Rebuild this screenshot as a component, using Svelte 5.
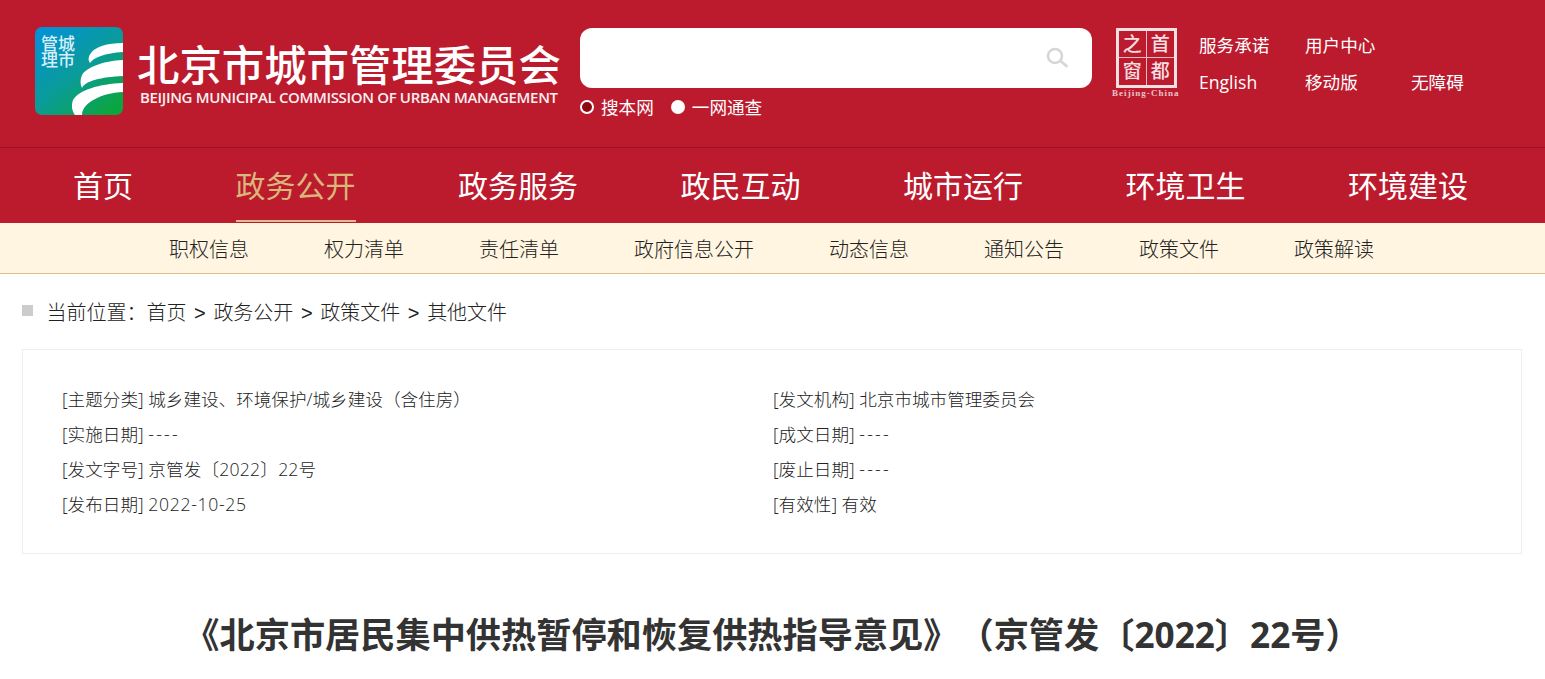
<script>
  const LP = '\uFF08';
  const RP = '\uFF09';
  const COLON = '\uFF1A';
  const nav = ['首页', '政务公开', '政务服务', '政民互动', '城市运行', '环境卫生', '环境建设'];
  const sub = ['职权信息', '权力清单', '责任清单', '政府信息公开', '动态信息', '通知公告', '政策文件', '政策解读'];
  const crumbs = ['首页', '政务公开', '政策文件', '其他文件'];
  const meta = [
    { k: '[主题分类]', v: `城乡建设、环境保护/城乡建设${LP}含住房${RP}`, kind: '', k2: '[发文机构]', v2: '北京市城市管理委员会', kind2: '' },
    { k: '[实施日期]', v: '----', kind: 'dash', k2: '[成文日期]', v2: '----', kind2: 'dash' },
    { k: '[发文字号]', v: '京管发〔2022〕22号', kind: 'num', k2: '[废止日期]', v2: '----', kind2: 'dash' },
    { k: '[发布日期]', v: '2022-10-25', kind: 'date', k2: '[有效性]', v2: '有效', kind2: '' }
  ];
  const title = `《北京市居民集中供热暂停和恢复供热指导意见》${LP}京管发〔2022〕22号${RP}`;
</script>

<header class="top">
  <div class="logo">
    <svg class="logo-art" viewBox="0 0 88 88" aria-hidden="true">
      <defs>
        <linearGradient id="lg" x1="0" y1="0" x2="0.8" y2="1">
          <stop offset="0" stop-color="#0290dc" />
          <stop offset="0.55" stop-color="#0a9c9a" />
          <stop offset="1" stop-color="#0ba540" />
        </linearGradient>
      </defs>
      <rect width="88" height="88" rx="7" fill="url(#lg)" />
      <path d="M88 16C72 16 60 20 56 26C53 30 53 33 55 36C58 31 70 26 88 25Z" fill="#fff" />
      <path d="M88 33C68 34 52 40 47 48C45 53 45 57 47 61C50 54 66 50 88 49Z" fill="#fff" />
      <path d="M88 56C64 57 44 63 38 73C36 79 37 84 40 88H47C47 76 66 66 88 65Z" fill="#fff" />
    </svg>
    <span class="logo-cn">管城<br />理市</span>
  </div>
  <div class="brand">
    <div class="brand-cn">北京市城市管理委员会</div>
    <div class="brand-en">BEIJING MUNICIPAL COMMISSION OF URBAN MANAGEMENT</div>
  </div>
  <div class="search-col">
    <div class="search">
      <svg viewBox="0 0 24 24" width="24" height="24" aria-hidden="true">
        <circle cx="9" cy="10" r="7" fill="none" stroke="#d6d6d6" stroke-width="2.6" />
        <path d="M14.5 15L20.5 20" stroke="#d6d6d6" stroke-width="2.8" stroke-linecap="round" />
      </svg>
    </div>
    <div class="radios">
      <span class="radio"><i class="dot off"></i>搜本网</span>
      <span class="radio"><i class="dot on"></i>一网通查</span>
    </div>
  </div>
  <div class="capital">
    <div class="seal">
      <span>之</span><span>首</span><span>窗</span><span>都</span>
    </div>
    <div class="seal-en">Beijing-China</div>
  </div>
  <div class="links">
    <span>服务承诺</span><span>用户中心</span><span></span>
    <span>English</span><span>移动版</span><span>无障碍</span>
  </div>
</header>

<nav class="main">
  {#each nav as n, i}
    <span class="nav-item" class:active={i === 1}>{n}</span>
  {/each}
</nav>

<div class="sub">
  {#each sub as s}<span>{s}</span>{/each}
</div>

<div class="crumb">
  <i class="sq"></i>
  <span>当前位置{COLON}</span>
  {#each crumbs as c, i}
    {#if i > 0}<span class="sep">&gt;</span>{/if}<span>{c}</span>
  {/each}
</div>

<section class="meta">
  {#each meta as r}
    <div class="cell"><span>{r.k}</span> <span class={r.kind}>{r.v}</span></div>
    <div class="cell"><span>{r.k2}</span> <span class={r.kind2}>{r.v2}</span></div>
  {/each}
</section>

<h1>{title}</h1>

<style>
  :global(body) {
    margin: 0;
    background: #fff;
    color: #222;
    font-family: "Open Sans", "Noto Sans CJK SC", sans-serif;
    font-weight: 300;
    overflow: hidden;
  }
  .top {
    height: 147px;
    background: #bc1b2e;
    display: flex;
    align-items: flex-start;
    color: #fff;
    box-sizing: border-box;
    padding-left: 35px;
    font-weight: 400;
  }
  .logo {
    position: relative;
    width: 88px;
    height: 88px;
    margin-top: 27px;
    flex: none;
  }
  .logo-art {
    display: block;
    width: 88px;
    height: 88px;
  }
  .logo-cn {
    position: absolute;
    left: 6px;
    top: 9px;
    font-size: 17px;
    line-height: 16px;
    font-weight: 500;
    color: #d8eef8;
  }
  .brand {
    margin: 42px 0 0 15px;
    width: 427px;
    flex: none;
  }
  .brand-cn {
    font-size: 42.4px;
    line-height: 46px;
    font-weight: 500;
    white-space: nowrap;
    margin-left: -1px;
  }
  .brand-en {
    font-size: 15px;
    font-weight: 600;
    line-height: 18px;
    letter-spacing: -0.34px;
    margin-left: 2px;
    white-space: nowrap;
    color: #fbeef0;
  }
  .search-col {
    margin: 28px 0 0 15px;
    width: 512px;
    flex: none;
  }
  .search {
    height: 60px;
    background: #fff;
    border-radius: 12px;
    display: flex;
    align-items: center;
    justify-content: flex-end;
    padding-right: 22px;
    box-sizing: border-box;
  }
  .radios {
    display: flex;
    gap: 17px;
    font-size: 17.6px;
    line-height: 24px;
    margin-top: 7px;
    height: 24px;
  }
  .radio {
    display: flex;
    align-items: center;
    gap: 7px;
  }
  .dot {
    width: 14px;
    height: 14px;
    border-radius: 50%;
    box-sizing: border-box;
    display: block;
  }
  .dot.off {
    background: #8c0a14;
    border: 2px solid #fff;
  }
  .dot.on {
    background: #fff;
  }
  .capital {
    margin: 28px 0 0 21px;
    width: 67px;
    flex: none;
  }
  .seal {
    width: 61px;
    height: 60px;
    margin-left: 3px;
    box-sizing: border-box;
    border: 3px solid #f4dfe2;
    display: grid;
    grid-template-columns: 1fr 1fr;
    grid-template-rows: 1fr 1fr;
  }
  .seal span {
    display: flex;
    align-items: center;
    justify-content: center;
    font-size: 19px;
    font-weight: 500;
    line-height: 1;
    color: #f4dfe2;
    overflow: hidden;
  }
  .seal span:nth-child(odd) {
    border-right: 1px solid #e8bcc3;
  }
  .seal span:nth-child(-n + 2) {
    border-bottom: 1px solid #e8bcc3;
  }
  .seal-en {
    font-family: "Liberation Serif", serif;
    font-weight: 700;
    font-size: 9px;
    line-height: 11px;
    letter-spacing: 1.05px;
    margin-left: -1px;
    white-space: nowrap;
    color: #e9c5ca;
  }
  .links {
    margin: 27px 0 0 19px;
    display: grid;
    grid-template-columns: 106px 106px 106px;
    grid-auto-rows: 37px;
    font-size: 17.6px;
    line-height: 37px;
    white-space: nowrap;
  }
  .main {
    height: 76px;
    background: #bc1b2e;
    border-top: 1px solid #a01020;
    box-sizing: border-box;
    display: flex;
    justify-content: space-between;
    padding: 0 77px 0 73px;
  }
  .nav-item {
    font-size: 30px;
    font-weight: 400;
    line-height: 76px;
    height: 74px;
    color: #fff;
    box-sizing: border-box;
  }
  .nav-item.active {
    color: #dab679;
    border-bottom: 2px solid #dcbc8c;
  }
  .sub {
    height: 51px;
    background: #fff5e0;
    border-bottom: 1px solid #dcc08f;
    box-sizing: border-box;
    display: flex;
    justify-content: center;
    gap: 75px;
    padding-right: 2px;
    font-size: 20px;
    line-height: 53px;
  }
  .crumb {
    display: flex;
    align-items: center;
    margin: 22px 0 0 22px;
    height: 34px;
    font-size: 20px;
    line-height: 34px;
  }
  .sq {
    width: 11px;
    height: 11px;
    background: #ccc;
    margin: 0 13.5px 5px 0;
  }
  .sep {
    margin: 0 7.6px;
    font-family: "Liberation Sans", sans-serif;
  }
  .meta {
    box-sizing: border-box;
    margin: 19px 0 0 22px;
    width: 1500px;
    height: 205px;
    border: 1px solid #eee;
    padding: 32px 39px 0;
    display: grid;
    grid-template-columns: 711px 1fr;
    grid-auto-rows: 35px;
    font-size: 17.6px;
    line-height: 35px;
  }
  .cell {
    white-space: nowrap;
  }
  .num {
    letter-spacing: 0.2px;
  }
  .date {
    letter-spacing: 0.7px;
  }
  .dash {
    letter-spacing: 2.3px;
  }
  h1 {
    margin: 53px 0 0 0;
    text-align: center;
    font-size: 35.2px;
    line-height: 54px;
    font-weight: 700;
    color: #333;
    white-space: nowrap;
    text-spacing-trim: space-all;
  }
</style>
